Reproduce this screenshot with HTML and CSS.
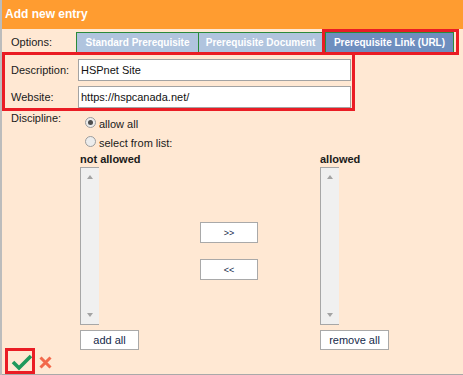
FILE: index.html
```
<!DOCTYPE html>
<html lang="en">

<head>
    <meta charset="UTF-8">
    <meta name="viewport" content="width=device-width, initial-scale=1.0">
    <title>Add new entry</title>
    <link rel="stylesheet" href="styles.css">
</head>

<body>
    <div class="dialog">
        <div class="dialog-title">Add new entry</div>

        <div class="dialog-body">
            <!-- Entry type tabs -->
            <div class="options-row">
                <span class="row-label">Options:</span>
                <div class="tabs">
                    <span class="tab tab-one">Standard Prerequisite</span>
                    <span class="tab tab-two">Prerequisite Document</span>
                    <span class="highlight-tab">
                        <span class="tab tab-active">Prerequisite Link (URL)</span>
                    </span>
                </div>
            </div>

            <div class="highlight-box">
                <div class="field-row">
                    <label for="descInput">Description:</label>
                    <input type="text" id="descInput" value="HSPnet Site">
                </div>
                <div class="field-row">
                    <label for="siteInput">Website:</label>
                    <input type="text" id="siteInput" value="https://hspcanada.net/">
                </div>
            </div>

            <div class="discipline-row">
                <span class="row-label">Discipline:</span>
                <div class="radio-list">
                    <label class="radio-item"><input type="radio" name="discipline" checked> allow all</label>
                    <label class="radio-item"><input type="radio" name="discipline"> select from list:</label>
                </div>
            </div>

            <!-- Allowed / not allowed pickers -->
            <div class="picker">
                <div class="picker-heading">not allowed</div>
                <div></div>
                <div class="picker-heading">allowed</div>

                <div class="listbox">
                    <span class="arrow-up"></span>
                    <span class="arrow-down"></span>
                </div>
                <div class="move-buttons">
                    <button class="small-btn move-btn">&gt;&gt;</button>
                    <button class="small-btn move-btn">&lt;&lt;</button>
                </div>
                <div class="listbox">
                    <span class="arrow-up"></span>
                    <span class="arrow-down"></span>
                </div>

                <div><button class="small-btn add-btn">add all</button></div>
                <div></div>
                <div><button class="small-btn remove-btn">remove all</button></div>
            </div>
        </div>

        <div class="dialog-footer">
            <span class="highlight-ok">
                <svg width="24" height="20" viewBox="0 0 24 20">
                    <path d="M5 11 L11 17 L23 5" fill="none" stroke="#1f995c" stroke-width="3.6" />
                </svg>
            </span>
            <svg class="cancel-icon" width="13" height="13" viewBox="0 0 13 13">
                <path d="M1.5 1.5 L11.5 11.5 M11.5 1.5 L1.5 11.5" stroke="#f2694b" stroke-width="3" />
            </svg>
        </div>
    </div>
</body>

</html>
```

FILE: styles.css
```
body {
    margin: 0;
    background-color: #bcbcbc;
    font-family: "Liberation Sans", Arial, sans-serif;
    font-size: 11px;
    color: #1a1a1a;
    overflow: hidden;
}

.dialog {
    margin-left: 2px;
    width: 470px;
    height: 375px;
    background-color: #ffe8d3;
    /* Peach body */
    border-bottom: 1px solid #a9a9a9;
    box-sizing: border-box;
}

.dialog-title {
    height: 29px;
    background-color: #ff9c30;
    color: #fff;
    font-weight: bold;
    font-size: 12px;
    line-height: 29px;
    padding-left: 3px;
    padding-bottom: 1px;
    box-sizing: border-box;
}

.dialog-body {
    padding-left: 9px;
}

.row-label {
    line-height: 14px;
}

.options-row {
    display: flex;
    align-items: center;
    height: 26px;
}

.options-row .row-label {
    width: 65px;
}

.tabs {
    display: flex;
    align-items: center;
    margin-left: 0;
}

.tab {
    display: inline-block;
    height: 20px;
    line-height: 19px;
    box-sizing: border-box;
    text-align: center;
    background-color: #b0c4de;
    color: #fff;
    font-weight: bold;
    font-size: 10px;
    border-top: 1px solid #2b8a3b;
    border-left: 1px solid #2b8a3b;
}

.tab-one {
    width: 122px;
}

.tab-two {
    width: 124px;
}

.highlight-tab {
    display: flex;
    border: 3px solid #ea1c24;
    padding-right: 2px;
}

.tab-active {
    width: 129px;
    background-color: #6e8ebf;
    border-right: 1px solid #2b8a3b;
}

.highlight-box {
    width: 353px;
    margin-left: -9px;
    margin-top: -3px;
    border: 3px solid #ea1c24;
    box-sizing: border-box;
    padding: 4px 1px 0 6px;
    display: flex;
    flex-direction: column;
    gap: 5px;
}

.field-row {
    display: flex;
    align-items: center;
}

.field-row label {
    width: 67px;
}

.field-row input {
    width: 273px;
    height: 22px;
    box-sizing: border-box;
    margin: 0;
    padding: 0 2px;
    border: 1px solid #a3a3a3;
    background-color: #fff;
    font-family: "Liberation Sans", Arial, sans-serif;
    font-size: 11px;
    color: #111;
}

.discipline-row {
    display: flex;
    align-items: flex-start;
}

.discipline-row .row-label {
    width: 74px;
}

.radio-list {
    margin-top: 3px;
}

.radio-item {
    display: flex;
    align-items: center;
    height: 19px;
    gap: 3px;
}

.radio-item input {
    appearance: none;
    width: 11px;
    height: 11px;
    margin: -2px 0 0 0;
    border: 1px solid #9c9c9c;
    border-radius: 50%;
    background-color: #ececec;
    box-sizing: border-box;
    display: grid;
    place-items: center;
}

.radio-item input:checked::after {
    content: "";
    width: 5px;
    height: 5px;
    border-radius: 50%;
    background-color: #4d4d4d;
}

.picker {
    display: grid;
    grid-template-columns: 120px 120px 80px;
    margin-left: 69px;
}

.picker-heading {
    font-weight: bold;
    line-height: 14px;
    margin-bottom: 1px;
}

.listbox {
    position: relative;
    width: 19px;
    height: 158px;
    box-sizing: border-box;
    background-color: #f0f0f0;
    border: 1px solid #a7a7a7;
    border-right: none;
}

.arrow-up,
.arrow-down {
    position: absolute;
    left: 6px;
    width: 0;
    height: 0;
    border-left: 3.5px solid transparent;
    border-right: 3.5px solid transparent;
}

.arrow-up {
    top: 7px;
    border-bottom: 4px solid #a3a3a3;
}

.arrow-down {
    bottom: 7px;
    border-top: 4px solid #a3a3a3;
}

.move-buttons {
    display: flex;
    flex-direction: column;
    gap: 16px;
    padding-top: 55px;
}

.small-btn {
    height: 21px;
    margin: 0;
    padding: 0;
    background-color: #fff;
    border: 1px solid #a9a9a9;
    font-family: "Liberation Sans", Arial, sans-serif;
    font-size: 11px;
    color: #15294a;
    cursor: pointer;
}

.move-btn {
    width: 58px;
    font-size: 9px;
}

.add-btn {
    width: 59px;
    height: 20px;
    margin-top: 5px;
}

.remove-btn {
    width: 69px;
    height: 20px;
    margin-top: 5px;
}

.dialog-footer {
    display: flex;
    align-items: center;
    margin-top: -2px;
    padding-left: 3px;
}

.highlight-ok {
    display: flex;
    width: 30px;
    height: 26px;
    box-sizing: border-box;
    border: 3px solid #ea1c24;
}

.cancel-icon {
    margin-left: 4px;
    margin-top: 2px;
}
```
